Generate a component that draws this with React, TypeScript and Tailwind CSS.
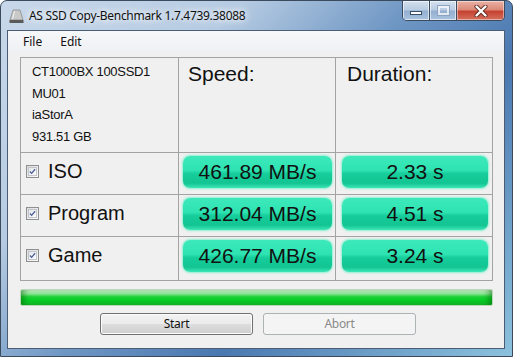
import React from 'react';

const rows = [
  { name: 'ISO', speed: '461.89 MB/s', time: '2.33 s' },
  { name: 'Program', speed: '312.04 MB/s', time: '4.51 s' },
  { name: 'Game', speed: '426.77 MB/s', time: '3.24 s' },
];

function Check() {
  return (
    <div className="w-[13px] h-[13px] border border-[#8e8f8f] bg-[linear-gradient(135deg,#dcdcdc,#fbfbfb)] p-px shrink-0">
      <div className="w-full h-full border border-[#c2c6cc] bg-[linear-gradient(135deg,#e4e6ea,#fdfdfd)] flex items-center justify-center">
        <svg width="9" height="9" viewBox="0 0 9 9">
          <path d="M1.2 4.6 L3.4 6.9 L7.8 1.6" stroke="#4a5f97" strokeWidth="1.7" fill="none" />
        </svg>
      </div>
    </div>
  );
}

function Pill({ text, w, ml }: { text: string; w: string; ml: string }) {
  return (
    <div
      className={`${w} ${ml} mt-[3px] h-[32px] rounded-[7px] flex items-center justify-center text-[21px] text-[#111] bg-[linear-gradient(to_bottom,#3de9bb_0%,#2ee3b1_45%,#16cd9b_55%,#12c592_85%,#3fe6b7_100%)] shadow-[0_0_2px_1px_#8ff0d2]`}
    >
      {text}
    </div>
  );
}

export default function App() {
  return (
    <div className="w-[513px] h-[357px] overflow-hidden rounded-t-[7px] border border-[#3b4a5d] bg-[linear-gradient(135deg,#c8d8ea_0%,#b6cbe2_28%,#6f97c4_48%,#4a78b0_66%,#8cc2dd_100%)] flex flex-col font-['Liberation_Sans',Arial,sans-serif]">
      {/* title bar */}
      <div className="h-[29px] flex items-start shrink-0">
        <div className="flex items-center mt-[6px] ml-[7px]">
          <svg width="17" height="16" viewBox="0 0 17 16">
            <path d="M5 2 L12 2 L15 12 L2 12 Z" fill="#c9c9c9" stroke="#8a8a8a" strokeWidth="0.8" />
            <path d="M6 3 L7 3 L5 11 L4 11 Z" fill="#f2f2f2" />
            <rect x="1.5" y="12" width="14" height="3" fill="#5a5a5a" />
          </svg>
          <span className="ml-[4px] text-[12px] text-[#111] font-['Noto_Sans',sans-serif] tracking-[-0.3px] [text-shadow:0_0_6px_#ffffff,0_0_10px_#ffffff]">
            AS SSD Copy-Benchmark 1.7.4739.38088
          </span>
        </div>
        <div className="ml-auto mr-[7px] flex h-[20px] border border-t-0 border-[#3b4a5d] rounded-b-[5px] overflow-hidden">
          <div className="w-[27px] border-r border-[#3b4a5d] bg-[linear-gradient(to_bottom,#d3e0ee_0%,#b8cbe2_48%,#93aed0_52%,#a9c3df_100%)] shadow-[inset_0_0_0_1px_rgba(255,255,255,0.6)] flex items-center justify-center">
            <div className="w-[12px] h-[4px] mt-[4px] bg-white border border-[#3a4d66]" />
          </div>
          <div className="w-[27px] border-r border-[#3b4a5d] bg-[linear-gradient(to_bottom,#d3e0ee_0%,#b8cbe2_48%,#93aed0_52%,#a9c3df_100%)] shadow-[inset_0_0_0_1px_rgba(255,255,255,0.6)] flex items-center justify-center">
            <div className="w-[11px] h-[9px] border-2 border-white/70 outline outline-1 outline-[#8ea3bf]" />
          </div>
          <div className="w-[47px] bg-[linear-gradient(to_bottom,#eab2a5_0%,#dc8a78_45%,#c64231_55%,#d3705c_100%)] shadow-[inset_0_0_0_1px_rgba(255,255,255,0.45)] flex items-center justify-center">
            <svg width="14" height="12" viewBox="0 0 14 12">
              <path d="M2.5 1.5 L11.5 10.5 M11.5 1.5 L2.5 10.5" stroke="#5a2a22" strokeWidth="4" strokeLinecap="round" />
              <path d="M2.5 1.5 L11.5 10.5 M11.5 1.5 L2.5 10.5" stroke="#ffffff" strokeWidth="2.4" strokeLinecap="round" />
            </svg>
          </div>
        </div>
      </div>

      {/* client area */}
      <div className="ml-[6px] mr-[7px] mb-[7px] flex-1 border border-[#4a5d75] bg-[#f0f0f0] flex flex-col">
        {/* menu */}
        <div className="h-[21px] flex items-center text-[12px] text-[#111] font-['Noto_Sans',sans-serif] bg-[linear-gradient(to_bottom,#f7f8fa,#eef0f3)]">
          <span className="ml-[15px]">File</span>
          <span className="ml-[18px]">Edit</span>
        </div>

        {/* table */}
        <div className="ml-[12px] mt-[5px] w-[473px] grid grid-cols-[157px_156px_156px] grid-rows-[94px_41px_41px_43px] gap-px p-px bg-[#a3a3a3]">
          <div className="bg-[#f0f0f0] pl-[11px] pt-[3px] text-[13px] leading-[21.5px] text-[#111] tracking-[-0.3px]">
            <div>CT1000BX 100SSD1</div>
            <div>MU01</div>
            <div>iaStorA</div>
            <div>931.51 GB</div>
          </div>
          <div className="bg-[#f0f0f0] pl-[9px] pt-[4px] text-[21px] leading-[24px] text-[#111]">Speed:</div>
          <div className="bg-[#f0f0f0] pl-[11px] pt-[4px] text-[21px] leading-[24px] text-[#111]">Duration:</div>
          {rows.map(r => (
            <React.Fragment key={r.name}>
              <div className="bg-[#f0f0f0] flex items-start pl-[5px] pt-[12px]">
                <Check />
                <span className="ml-[9px] -mt-[6px] text-[20px] leading-[24px] text-[#111]">{r.name}</span>
              </div>
              <div className="bg-[#f0f0f0]">
                <Pill text={r.speed} w="w-[149px]" ml="ml-[4px]" />
              </div>
              <div className="bg-[#f0f0f0]">
                <Pill text={r.time} w="w-[146px]" ml="ml-[6px]" />
              </div>
            </React.Fragment>
          ))}
        </div>

        {/* progress */}
        <div className="ml-[12px] mt-[8px] w-[473px] h-[17px] rounded-[2px] border border-[#b9d8b9] bg-[linear-gradient(to_bottom,#d2f6d2_0%,#8ee796_25%,#1fd13a_45%,#06cc24_70%,#14be2c_100%)] shadow-[inset_6px_0_6px_-3px_rgba(0,90,0,0.5),inset_-6px_0_6px_-3px_rgba(0,90,0,0.5)]" />

        {/* buttons */}
        <div className="mt-[7px] ml-[92px] flex gap-[10px]">
          <div className="w-[153px] h-[22px] rounded-[3px] border border-[#707070] bg-[linear-gradient(to_bottom,#f2f2f2_0%,#ebebeb_50%,#dddddd_50%,#cfcfcf_100%)] shadow-[inset_0_0_0_1px_#fcfcfc] flex items-center justify-center text-[12px] text-[#111] font-['Noto_Sans',sans-serif] tracking-[-0.3px]">
            Start
          </div>
          <div className="w-[153px] h-[22px] rounded-[3px] border border-[#adb2b5] bg-[#f4f4f4] flex items-center justify-center text-[12px] text-[#8a8a8a] font-['Noto_Sans',sans-serif] tracking-[-0.3px]">
            Abort
          </div>
        </div>
      </div>
    </div>
  );
}
